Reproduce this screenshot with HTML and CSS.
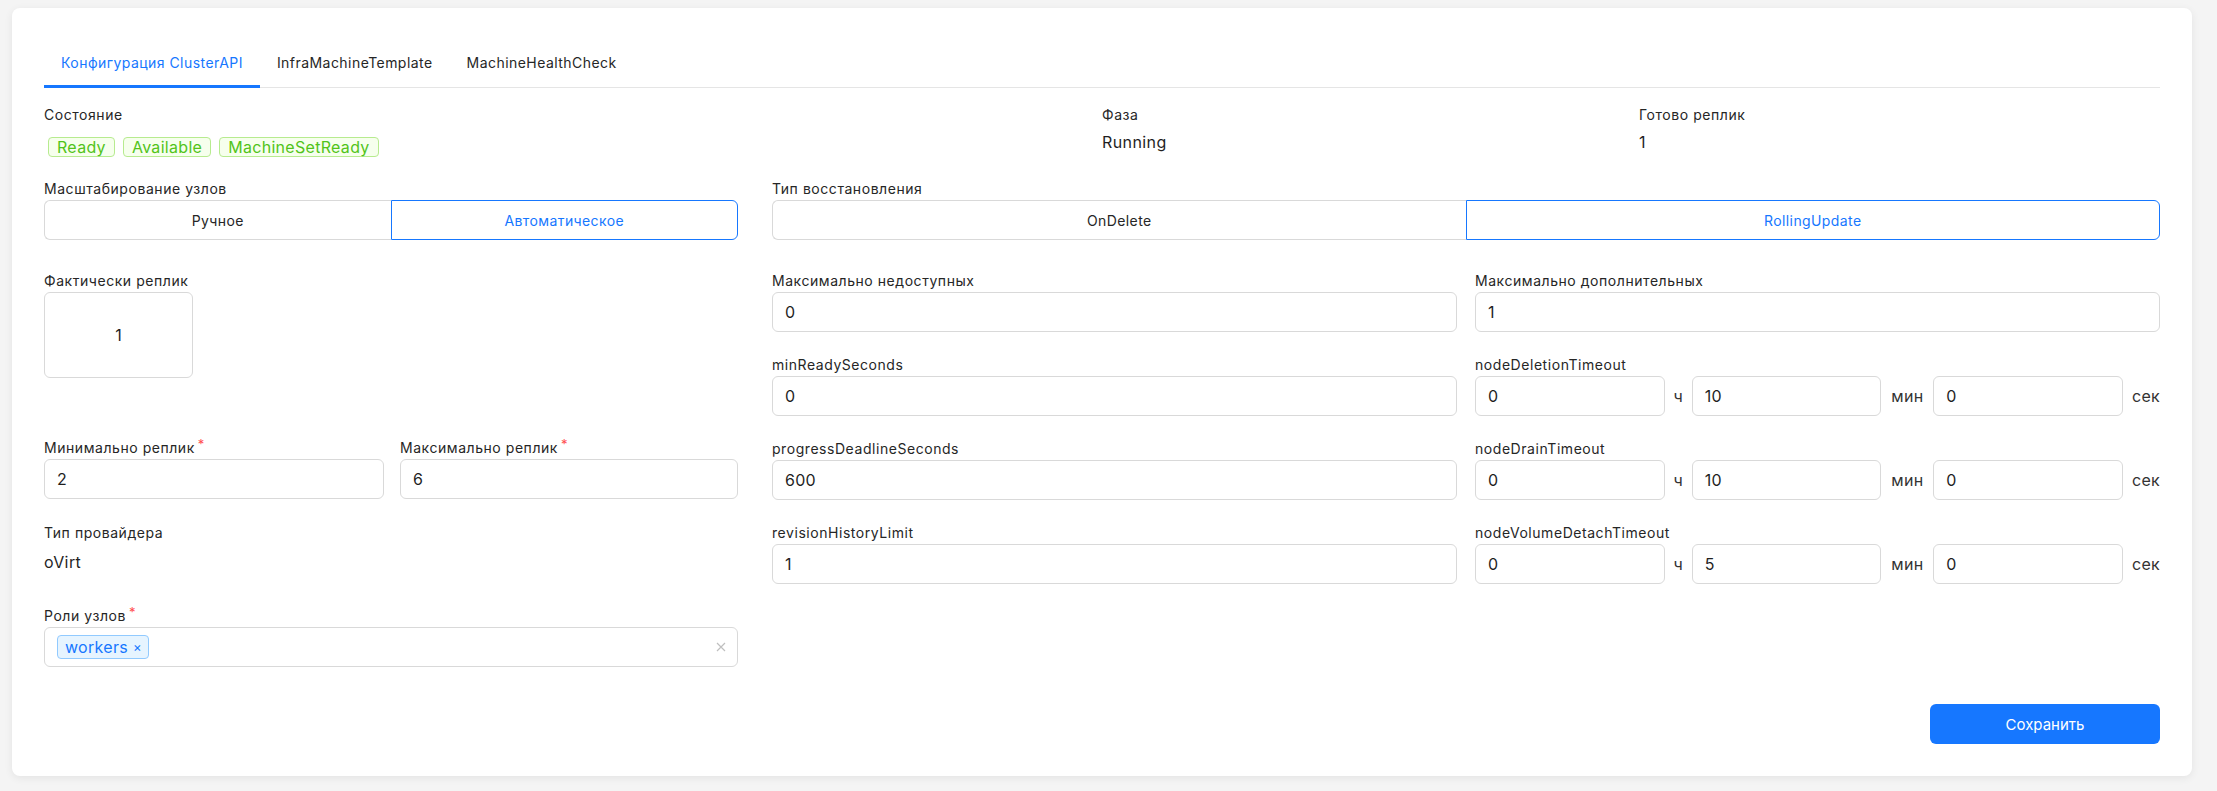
FILE: index.html
```html
<html>
  <head>
    <title>MachineDeployment</title>
    <link rel="stylesheet" href="styles.css">
  </head>

  <body>
  <div class="card">
    <div class="tabs">
      <div class="tab active">Конфигурация ClusterAPI</div>
      <div class="tab">InfraMachineTemplate</div>
      <div class="tab">MachineHealthCheck</div>
    </div>

    <div class="statusRow">
      <div class="item">
        <div class="label">Состояние</div>
        <div class="tags">
          <span class="tag green">Ready</span>
          <span class="tag green">Available</span>
          <span class="tag green">MachineSetReady</span>
        </div>
      </div>
      <div class="item">
        <div class="label">Фаза</div>
        <div class="value">Running</div>
      </div>
      <div class="item">
        <div class="label">Готово реплик</div>
        <div class="value">1</div>
      </div>
    </div>

    <div class="modeRow">
      <div class="field">
        <div class="label">Масштабирование узлов</div>
        <div class="segmented">
          <div class="segment">Ручное</div>
          <div class="segment selected">Автоматическое</div>
        </div>
      </div>
      <div class="field">
        <div class="label">Тип восстановления</div>
        <div class="segmented">
          <div class="segment">OnDelete</div>
          <div class="segment selected">RollingUpdate</div>
        </div>
      </div>
    </div>

    <div class="mainRow">
      <div class="leftCol">
        <div class="field replicas">
          <div class="label">Фактически реплик</div>
          <div class="countBox">1</div>
        </div>

        <div class="pair">
          <div class="field">
            <div class="label">Минимально реплик<span class="req">*</span></div>
            <div class="input">2</div>
          </div>
          <div class="field">
            <div class="label">Максимально реплик<span class="req">*</span></div>
            <div class="input">6</div>
          </div>
        </div>

        <div class="field provider">
          <div class="label">Тип провайдера</div>
          <div class="value">oVirt</div>
        </div>

        <div class="field">
          <div class="label">Роли узлов<span class="req">*</span></div>
          <div class="select">
            <span class="tag blue">workers<span class="tagClose">×</span></span>
            <svg class="clear" width="10" height="10" viewBox="0 0 10 10">
              <path d="M1 1 L9 9 M9 1 L1 9" stroke="#bfbfbf" stroke-width="1.2" fill="none"/>
            </svg>
          </div>
        </div>
      </div>

      <div class="rightCol">
        <div class="field">
          <div class="label">Максимально недоступных</div>
          <div class="input">0</div>
        </div>
        <div class="field">
          <div class="label">Максимально дополнительных</div>
          <div class="input">1</div>
        </div>

        <div class="field">
          <div class="label">minReadySeconds</div>
          <div class="input">0</div>
        </div>
        <div class="field">
          <div class="label">nodeDeletionTimeout</div>
          <div class="duration">
            <div class="input">0</div><span class="unit u1">ч</span>
            <div class="input">10</div><span class="unit u2">мин</span>
            <div class="input">0</div><span class="unit u3">сек</span>
          </div>
        </div>

        <div class="field">
          <div class="label">progressDeadlineSeconds</div>
          <div class="input">600</div>
        </div>
        <div class="field">
          <div class="label">nodeDrainTimeout</div>
          <div class="duration">
            <div class="input">0</div><span class="unit u1">ч</span>
            <div class="input">10</div><span class="unit u2">мин</span>
            <div class="input">0</div><span class="unit u3">сек</span>
          </div>
        </div>

        <div class="field">
          <div class="label">revisionHistoryLimit</div>
          <div class="input">1</div>
        </div>
        <div class="field">
          <div class="label">nodeVolumeDetachTimeout</div>
          <div class="duration">
            <div class="input">0</div><span class="unit u1">ч</span>
            <div class="input">5</div><span class="unit u2">мин</span>
            <div class="input">0</div><span class="unit u3">сек</span>
          </div>
        </div>
      </div>
    </div>

    <div class="actions">
      <button class="saveButton">Сохранить</button>
    </div>
  </div>
  </body>
</html>
```

FILE: styles.css
```css
body {
  margin: 0;
  padding: 8px 25px 14px 12px;
  background-color: #f4f4f4;
  font-family: Inter, "Noto Sans", sans-serif;
  font-size: 14px;
  color: #262626;
}

.card {
  background-color: #ffffff;
  border-radius: 8px;
  box-shadow: 0 2px 8px rgba(0, 0, 0, 0.07);
  padding: 32px 32px 32px 32px;
}

/* tabs */
.tabs {
  display: flex;
  border-bottom: 1px solid #e5e5e5;
  margin-bottom: 16px;
}

.tab {
  padding: 12px 17px;
  line-height: 21px;
  letter-spacing: 0.45px;
  color: #262626;
  border-bottom: 3px solid transparent;
  margin-bottom: -1px;
}

.tab.active {
  color: #1677ff;
  border-bottom-color: #1677ff;
}

.label {
  line-height: 22px;
  height: 22px;
  letter-spacing: 0.55px;
  color: #262626;
}

.req {
  color: #ff4d4f;
  font-size: 13px;
  margin-left: 3px;
  vertical-align: 4px;
  line-height: 0;
}

.value {
  margin-top: 6px;
  font-size: 16px;
  line-height: 24px;
  letter-spacing: 0.4px;
  color: #1f1f1f;
}

/* status row */
.statusRow {
  display: grid;
  grid-template-columns: 1058px 537px 1fr;
  height: 54px;
  margin-bottom: 20px;
}

.statusRow .value {
  margin-top: 4px;
}

.tags {
  display: flex;
  gap: 8px;
  margin-top: 11px;
  padding-left: 4px;
}

.tag {
  display: inline-flex;
  align-items: center;
  height: 20px;
  box-sizing: border-box;
  padding: 0 8px;
  border: 1px solid;
  border-radius: 4px;
  font-size: 16px;
  letter-spacing: 0.3px;
}

.tag.green {
  color: #52c41a;
  background-color: #f6ffed;
  border-color: #b7eb8f;
}

.tag.blue {
  color: #1677ff;
  background-color: #e6f4ff;
  border-color: #91caff;
  height: 24px;
  padding: 0 6px 0 7px;
}

.tagClose {
  font-size: 13px;
  margin-left: 5px;
}

/* segmented switches */
.modeRow {
  display: grid;
  grid-template-columns: 694px 1fr;
  column-gap: 34px;
  margin-bottom: 30px;
}

.segmented {
  display: flex;
  height: 40px;
}

.segment {
  flex: 1;
  display: flex;
  align-items: center;
  justify-content: center;
  border: 1px solid #d9d9d9;
  letter-spacing: 0.4px;
  color: #262626;
}

.segment:first-child {
  border-radius: 6px 0 0 6px;
  border-right: none;
}

.segment:last-child {
  border-radius: 0 6px 6px 0;
}

.segment.selected {
  border-color: #1677ff;
  color: #1677ff;
}

/* main form */
.mainRow {
  display: grid;
  grid-template-columns: 694px 1fr;
  column-gap: 34px;
  align-items: start;
}

.input {
  height: 40px;
  box-sizing: border-box;
  border: 1px solid #d9d9d9;
  border-radius: 6px;
  padding: 0 12px;
  display: flex;
  align-items: center;
  font-size: 16px;
  letter-spacing: 0.3px;
  color: #1f1f1f;
}

.countBox {
  width: 149px;
  height: 86px;
  box-sizing: border-box;
  border: 1px solid #d9d9d9;
  border-radius: 6px;
  display: flex;
  align-items: center;
  justify-content: center;
  font-size: 16px;
  color: #1f1f1f;
}

.replicas {
  margin-bottom: 59px;
}

.pair {
  display: grid;
  grid-template-columns: 340px 1fr;
  column-gap: 16px;
  margin-bottom: 23px;
}

.provider {
  margin-bottom: 31px;
}

.select {
  height: 40px;
  box-sizing: border-box;
  border: 1px solid #d9d9d9;
  border-radius: 6px;
  padding: 0 11px 0 12px;
  display: flex;
  align-items: center;
  justify-content: space-between;
}

.rightCol {
  display: grid;
  grid-template-columns: 1fr 1fr;
  align-content: start;
  column-gap: 18px;
  row-gap: 22px;
}

.duration {
  display: flex;
  align-items: center;
}

.duration .input {
  flex: 1;
}

.unit {
  font-size: 16px;
  color: #333333;
  text-align: center;
  letter-spacing: 0.3px;
}

.u1 {
  width: 27px;
}

.u2 {
  width: 52px;
}

.u3 {
  width: 37px;
  text-align: right;
}

.actions {
  display: flex;
  justify-content: flex-end;
  margin-top: 37px;
}

.saveButton {
  width: 230px;
  height: 40px;
  border: 0px;
  border-radius: 6px;
  background-color: #1677ff;
  color: #ffffff;
  font-family: Inter, "Noto Sans", sans-serif;
  font-size: 15px;
}
```
